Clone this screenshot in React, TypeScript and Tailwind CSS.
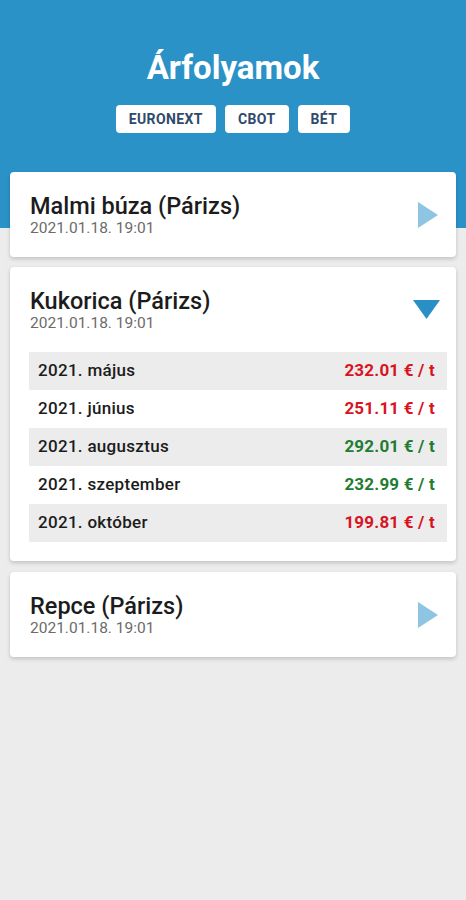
import React from 'react';

type Row = { month: string; price: string; up: boolean };

const rows: Row[] = [
  { month: '2021. május', price: '232.01 € / t', up: false },
  { month: '2021. június', price: '251.11 € / t', up: false },
  { month: '2021. augusztus', price: '292.01 € / t', up: true },
  { month: '2021. szeptember', price: '232.99 € / t', up: true },
  { month: '2021. október', price: '199.81 € / t', up: false },
];

const RightArrow = () => (
  <svg width="20" height="26" viewBox="0 0 20 26">
    <polygon points="0,0 20,13 0,26" fill="#8ec5e2" />
  </svg>
);

const DownArrow = () => (
  <svg width="27" height="19" viewBox="0 0 27 19">
    <polygon points="0,0 27,0 13.5,19" fill="#2a8fc7" />
  </svg>
);

const CardHead = ({ title, open }: { title: string; open?: boolean }) => (
  <div className={open ? 'flex items-center justify-between pl-[20px] pr-[16px]' : 'flex items-center justify-between pl-[20px] pr-[18px]'}>
    <div className="flex flex-col">
      <span className="text-[23.5px] leading-[27px] font-medium text-[#1c1c1c]">{title}</span>
      <span className="text-[15.5px] leading-[16px] text-[#6b6b6b]">2021.01.18. 19:01</span>
    </div>
    {open ? <DownArrow /> : <RightArrow />}
  </div>
);

export default function App() {
  return (
    <div className="min-h-[900px] bg-[#ececec]" style={{ fontFamily: 'Roboto, "Noto Sans", sans-serif' }}>
      <header className="bg-[#2b92c7] h-[228px] flex flex-col items-center pt-[48px]">
        <h1 className="text-white font-bold text-[33px] leading-[40px]">Árfolyamok</h1>
        <div className="flex gap-[9px] mt-[17px]">
          {['EURONEXT', 'CBOT', 'BÉT'].map((t) => (
            <button
              key={t}
              className="bg-white rounded-[4px] h-[28px] px-[13px] text-[14px] font-bold text-[#2f4a6c] tracking-[0.4px]"
            >
              {t}
            </button>
          ))}
        </div>
      </header>

      <div className="-mt-[56px] px-[10px] flex flex-col gap-[10px]">
        <div className="bg-white rounded-[4px] shadow-[0_2px_4px_rgba(0,0,0,0.18)] py-[21px]">
          <CardHead title="Malmi búza (Párizs)" />
        </div>

        <div className="bg-white rounded-[4px] shadow-[0_2px_4px_rgba(0,0,0,0.18)] pt-[21px] pb-[19px]">
          <CardHead title="Kukorica (Párizs)" open />
          <div className="mt-[21px] ml-[19px] mr-[9px] flex flex-col">
            {rows.map((r, i) => (
              <div
                key={r.month}
                className={
                  i % 2 === 0
                    ? 'h-[38px] flex items-center justify-between pl-[9px] pr-[12px] bg-[#ececec]'
                    : 'h-[38px] flex items-center justify-between pl-[9px] pr-[12px] bg-white'
                }
              >
                <span className="text-[17px] font-medium text-[#1c1c1c] tracking-[0.3px]">{r.month}</span>
                <span className={r.up ? 'text-[17px] font-bold text-[#1f7d32] tracking-[0.2px]' : 'text-[17px] font-bold text-[#d8141f] tracking-[0.2px]'}>
                  {r.price}
                </span>
              </div>
            ))}
          </div>
        </div>

        <div className="bg-white rounded-[4px] shadow-[0_2px_4px_rgba(0,0,0,0.18)] py-[21px] mt-[1px]">
          <CardHead title="Repce (Párizs)" />
        </div>
      </div>
    </div>
  );
}
